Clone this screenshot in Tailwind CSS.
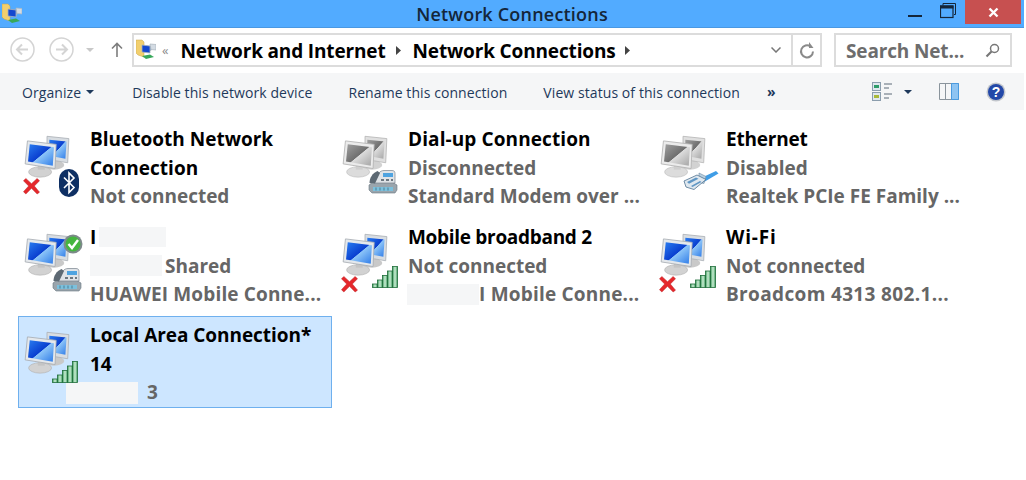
<!DOCTYPE html>
<html lang="en">
<head>
    <meta charset="UTF-8">
    <title>Network Connections</title>
    <script src="https://cdn.jsdelivr.net/npm/@tailwindcss/browser@4"></script>
</head>
<body class="bg-white overflow-hidden w-[1024px] h-[480px] font-['Open_Sans','Noto_Sans',sans-serif]">
    <!-- shared icon parts -->
    <svg width="0" height="0" class="absolute">
        <defs>
            <linearGradient id="blueScreen" x1="0" y1="0" x2="1" y2="1">
                <stop offset="0" stop-color="#2a7df0"/><stop offset="0.5" stop-color="#0a3fd0"/><stop offset="0.52" stop-color="#8cc4f8"/><stop offset="1" stop-color="#2f7ce8"/>
            </linearGradient>
            <linearGradient id="greyScreen" x1="0" y1="0" x2="1" y2="1">
                <stop offset="0" stop-color="#a0a0a0"/><stop offset="0.5" stop-color="#6f6f6f"/><stop offset="0.52" stop-color="#dcdcdc"/><stop offset="1" stop-color="#a5a5a5"/>
            </linearGradient>
            <linearGradient id="bar" x1="0" y1="0" x2="1" y2="0">
                <stop offset="0" stop-color="#3c9a5c"/><stop offset="0.5" stop-color="#cdeed6"/><stop offset="1" stop-color="#3c9a5c"/>
            </linearGradient>
            <symbol id="pcBlue" viewBox="0 0 40 40">
                <ellipse cx="26" cy="27" rx="9" ry="4" fill="#c9c9c9"/>
                <path d="M20 2l19 2-1 21-18-3z" fill="#d8dde2" stroke="#aab0b6" stroke-width=".7"/>
                <path d="M22 5l15 1.500-1 15-14-2.500z" fill="url(#blueScreen)"/>
                <ellipse cx="14" cy="33" rx="10" ry="4.500" fill="#d2d2d2" stroke="#b5b5b5" stroke-width=".6"/>
                <path d="M12 26h6v5h-6z" fill="#c4c4c4"/>
                <path d="M3 6l25 3-1 21-26-4z" fill="#e4e8ec" stroke="#a5abb1" stroke-width=".7"/>
                <path d="M5 9l21 2.500-1 16L3.500 24z" fill="url(#blueScreen)"/>
            </symbol>
            <symbol id="pcGrey" viewBox="0 0 40 40">
                <ellipse cx="26" cy="27" rx="9" ry="4" fill="#d2d2d2"/>
                <path d="M20 2l19 2-1 21-18-3z" fill="#e0e0e0" stroke="#b5b5b5" stroke-width=".7"/>
                <path d="M22 5l15 1.500-1 15-14-2.500z" fill="url(#greyScreen)"/>
                <ellipse cx="14" cy="33" rx="10" ry="4.500" fill="#dcdcdc" stroke="#c0c0c0" stroke-width=".6"/>
                <path d="M12 26h6v5h-6z" fill="#cfcfcf"/>
                <path d="M3 6l25 3-1 21-26-4z" fill="#ebebeb" stroke="#b0b0b0" stroke-width=".7"/>
                <path d="M5 9l21 2.500-1 16L3.500 24z" fill="url(#greyScreen)"/>
            </symbol>
            <symbol id="redX" viewBox="0 0 18 18">
                <path d="M3 1L9 6.500 15 1l2.500 2.500L12 9l5.500 6.500L15 17.500 9 11.500l-6 6L.5 15 6 9 .5 3.500z" fill="#e5272b" stroke="#b81e22" stroke-width=".5"/>
            </symbol>
            <symbol id="signal" viewBox="0 0 26 22">
                <g fill="url(#bar)" stroke="#1f6d3a" stroke-width=".8">
                    <rect x=".5" y="18" width="5" height="3.500"/>
                    <rect x="5.500" y="14" width="5" height="7.500"/>
                    <rect x="10.500" y="9.500" width="5" height="12"/>
                    <rect x="15.500" y="5" width="5" height="16.500"/>
                    <rect x="20.500" y=".5" width="5" height="21"/>
                </g>
            </symbol>
            <symbol id="modem" viewBox="0 0 30 24">
                <path d="M1 15l4-3h19l5 3v5l-2 3H4l-3-3z" fill="#9aa5ad" stroke="#6a7680" stroke-width=".6"/>
                <path d="M5 17h20v4H5z" fill="#7cc0dc"/>
                <path d="M8 17.500v3M12 17.500v3M16 17.500v3M20 17.500v3" stroke="#4c7f96"/>
                <path d="M6 13L11 3c1-1.500 3-2.500 5-2.500h8c2 0 3 1 3 3V13z" fill="#dfe3e7" stroke="#78838c" stroke-width=".7"/>
                <path d="M15 3h10v4H15z" fill="#4ea3e0"/>
                <path d="M1.500 13c0-5 3-10 8-12l2.500 2-5 10.500z" fill="#5d6973"/>
                <path d="M13 9h3v2h-3zM18 9h3v2h-3zM23 9h2v2h-2z" fill="#6d7780"/>
            </symbol>
            <symbol id="plug" viewBox="0 0 36 20">
                <path d="M18 8L33 1l2.500 2.500L21 12z" fill="#3f9de6"/>
                <path d="M16 3l7 3.500-2 7-5-1z" fill="#b8cfe0" stroke="#6f8ba3" stroke-width=".6"/>
                <path d="M1 11l13-6 9 4.500L11 19.500 3 17z" fill="#dfe8ef" stroke="#4f7291" stroke-width=".8"/>
                <path d="M4 12l9-4.500 2.500 1.300-9.500 5zM8 16l9-5 1.500 1-9 5z" fill="#5f96c4"/>
            </symbol>
            <symbol id="folderNet" viewBox="0 0 20 22">
                <path d="M0 1h6l2 2v15l-6-2L0 14z" fill="#f2cf6e" stroke="#c9a548" stroke-width=".5"/>
                <path d="M10 7l5 .5v4l-5-.5z" fill="#6f9fe8" stroke="#aab4bd" stroke-width=".7"/>
                <path d="M14 5l6 .5V11l-5-.5z" fill="#d3dbe3" stroke="#aab4bd" stroke-width=".7"/>
                <path d="M6 6l8 1v7l-8-1z" fill="#1448d0" stroke="#a9b4bd" stroke-width=".8"/>
                <path d="M6 17l8-1.500 4 2.500-8 2z" fill="#37a85a"/>
            </symbol>
        </defs>
    </svg>

    <!-- title bar -->
    <header class="relative h-[28px] bg-[#52abff] border-b border-[#4a98e2] flex items-center justify-center">
        <svg class="absolute left-[2px] top-[3px] w-[20px] h-[22px]"><use href="#folderNet"/></svg>
        <h1 class="text-[18px] font-semibold tracking-[0.2px] text-[#14263a] mt-[2px]">Network Connections</h1>
        <div class="absolute right-[3px] top-0 flex items-start">
            <svg class="w-[14px] h-[24px] mr-[18px]" viewBox="0 0 14 24"><rect y="15" width="14" height="2" fill="#14263a"/></svg>
            <svg class="w-[16px] h-[16px] mr-[9px] mt-[3px]" viewBox="0 0 16 16" fill="none" stroke="#14263a"><path d="M3 2.500V.500h12.500v11H14" stroke-width="1"/><rect x=".5" y="3" width="12.500" height="11.500" stroke-width="1.200"/><rect x=".5" y="3" width="12.500" height="2" fill="#14263a"/></svg>
            <div class="w-[56px] h-[24px] bg-[#c75050] flex items-center justify-center">
                <svg class="w-[11px] h-[11px]" viewBox="0 0 11 11"><path d="M1.500 1.500l8 8M9.500 1.500l-8 8" stroke="#fff" stroke-width="2.400"/></svg>
            </div>
        </div>
    </header>

    <!-- navigation -->
    <nav class="h-[45px] flex items-start pt-[5px] pl-[10px]">
        <svg class="w-[25px] h-[25px] mt-[4px]" viewBox="0 0 25 25" fill="none" stroke="#d4d4d4"><circle cx="12.500" cy="12.500" r="11.500" stroke-width="1.500"/><path d="M18 12.500H7.500M12 7.500l-5 5 5 5" stroke-width="2"/></svg>
        <svg class="w-[25px] h-[25px] mt-[4px] ml-[14px]" viewBox="0 0 25 25" fill="none" stroke="#d4d4d4"><circle cx="12.500" cy="12.500" r="11.500" stroke-width="1.500"/><path d="M7 12.500h10.500M13 7.500l5 5-5 5" stroke-width="2"/></svg>
        <svg class="w-[8px] h-[4px] mt-[15px] ml-[12px]" viewBox="0 0 8 4"><path d="M0 0h8L4 4z" fill="#c8c8c8"/></svg>
        <svg class="w-[12px] h-[15px] mt-[9px] ml-[17px]" viewBox="0 0 12 15" fill="none" stroke="#7d7d7d" stroke-width="1.600"><path d="M6 15V1.500M1 6.500l5-5 5 5"/></svg>
        <div class="ml-[9px] w-[690px] h-[34px] border-2 border-[#dcdcdc] flex items-center">
            <svg class="w-[20px] h-[22px] ml-[2px] shrink-0"><use href="#folderNet"/></svg>
            <span class="ml-[6px] text-[13px] leading-none text-[#8a8a8a]">«</span>
            <span class="ml-[12px] mt-[2px] text-[19px] font-bold tracking-[-0.15px] text-black">Network and Internet</span>
            <svg class="w-[5px] h-[9px] ml-[10px]" viewBox="0 0 5 9"><path d="M0 0l5 4.500L0 9z" fill="#444"/></svg>
            <span class="ml-[12px] mt-[2px] text-[19px] font-bold tracking-[-0.15px] text-black">Network Connections</span>
            <svg class="w-[5px] h-[9px] ml-[9px]" viewBox="0 0 5 9"><path d="M0 0l5 4.500L0 9z" fill="#444"/></svg>
            <svg class="w-[10px] h-[6px] ml-auto mr-[10px]" viewBox="0 0 10 6" fill="none" stroke="#777" stroke-width="1.500"><path d="M.5.500L5 5 9.500.500"/></svg>
            <div class="w-[29px] h-full border-l-2 border-[#dcdcdc] flex items-center justify-center">
                <svg class="w-[16px] h-[17px]" viewBox="0 0 16 17" fill="none" stroke="#8a8a8a" stroke-width="2"><path d="M11.500 4.500A6 6 0 1 0 14 9.500"/><path d="M10 0v6h4.500z" fill="#8a8a8a" stroke="none"/></svg>
            </div>
        </div>
        <div class="ml-[12px] w-[178px] h-[34px] border-2 border-[#dcdcdc] flex items-center pl-[10px]">
            <span class="mt-[3px] text-[19px] font-bold tracking-[-0.15px] text-[#6d6d6d]">Search Net...</span>
            <svg class="w-[15px] h-[15px] ml-auto mr-[10px]" viewBox="0 0 15 15" fill="none" stroke="#777"><circle cx="9.500" cy="5.500" r="4" stroke-width="1.500"/><path d="M6.500 8.500L1.500 13.500" stroke-width="2.200"/></svg>
        </div>
    </nav>

    <!-- command bar -->
    <div class="h-[37px] bg-[#f5f6f7] flex items-center pl-[22px] text-[14px] tracking-[0.08px] text-[#1e395b]">
        <span class="mt-[2px]">Organize</span>
        <svg class="w-[8px] h-[4px] ml-[5px]" viewBox="0 0 8 4"><path d="M0 0h8L4 4z" fill="#1e395b"/></svg>
        <span class="ml-[38px] mt-[2px]">Disable this network device</span>
        <span class="ml-[36px] mt-[2px]">Rename this connection</span>
        <span class="ml-[36px] mt-[2px]">View status of this connection</span>
        <span class="ml-[27px] text-[14px] font-bold leading-none">»</span>
        <svg class="w-[23px] h-[20px] ml-[96px]" viewBox="0 0 23 20" fill="none">
            <rect x=".5" y=".5" width="8" height="8" fill="#dfe8ee" stroke="#8b9dad"/><rect x="2" y="3" width="5" height="3" fill="#2f9c6a"/>
            <rect x=".5" y="10.500" width="8" height="8" fill="#dfe8ee" stroke="#8b9dad"/><rect x="2" y="13" width="5" height="3" fill="#a8b83a"/>
            <path d="M12 2h8M12 6h5M12 12h8M12 16h5" stroke="#5d6b78"/>
        </svg>
        <svg class="w-[8px] h-[4px] ml-[9px]" viewBox="0 0 8 4"><path d="M0 0h8L4 4z" fill="#1e395b"/></svg>
        <svg class="w-[20px] h-[18px] ml-[27px]" viewBox="0 0 20 18" fill="none"><rect x="13" y="1" width="6" height="16" fill="#8ec4f2"/><path d="M.5.500h19v16H.5zM6.500.500v16" stroke="#8a949c"/><path d="M12.500.500h7v16h-7z" stroke="#4a9be0"/></svg>
        <svg class="w-[20px] h-[20px] ml-[27px]" viewBox="0 0 20 20"><circle cx="10" cy="10" r="9.500" fill="#c2c6cc"/><circle cx="10" cy="10" r="8" fill="#2348a8"/><text x="10" y="15" text-anchor="middle" font-size="14" font-weight="700" fill="#fff" font-family="Liberation Sans, sans-serif">?</text></svg>
    </div>

    <!-- connections -->
    <main class="grid grid-cols-[314px_314px_314px] auto-rows-[92px] gap-x-[4px] gap-y-[6px] pl-[18px] pt-[10px] text-[19px] font-bold leading-[28.5px] text-[#666]">
        <div class="flex">
            <div class="relative w-[72px] shrink-0">
                <svg class="absolute left-[4px] top-[14px] w-[50px] h-[46px]"><use href="#pcBlue"/></svg>
                <svg class="absolute left-[5px] top-[57px] w-[17px] h-[18px]"><use href="#redX"/></svg>
                <svg class="absolute left-[40px] top-[48px] w-[22px] h-[30px]" viewBox="0 0 22 30"><rect x="1" y="1" width="20" height="28" rx="10" fill="#0e2f63"/><path d="M6 9.500l10 10-5 5V5l5 5-10 10" fill="none" stroke="#fff" stroke-width="1.600"/></svg>
            </div>
            <div class="pt-[5px]"><div class="text-black">Bluetooth Network<br>Connection</div><div>Not connected</div></div>
        </div>
        <div class="flex">
            <div class="relative w-[72px] shrink-0">
                <svg class="absolute left-[4px] top-[14px] w-[50px] h-[46px]"><use href="#pcGrey"/></svg>
                <svg class="absolute left-[32px] top-[50px] w-[30px] h-[24px]"><use href="#modem"/></svg>
            </div>
            <div class="pt-[5px]"><div class="text-black tracking-[0.1px]">Dial-up Connection</div><div>Disconnected</div><div>Standard Modem over ...</div></div>
        </div>
        <div class="flex">
            <div class="relative w-[72px] shrink-0">
                <svg class="absolute left-[4px] top-[14px] w-[50px] h-[46px]"><use href="#pcGrey"/></svg>
                <svg class="absolute left-[29px] top-[50px] w-[36px] h-[20px]"><use href="#plug"/></svg>
            </div>
            <div class="pt-[5px]"><div class="text-black tracking-[-0.2px]">Ethernet</div><div>Disabled</div><div>Realtek PCIe FE Family ...</div></div>
        </div>
        <div class="flex">
            <div class="relative w-[72px] shrink-0">
                <svg class="absolute left-[4px] top-[14px] w-[50px] h-[46px]"><use href="#pcBlue"/></svg>
                <svg class="absolute left-[45px] top-[16px] w-[20px] h-[20px]" viewBox="0 0 20 20"><circle cx="10" cy="10" r="9.500" fill="#7d8a8a"/><circle cx="10" cy="10" r="7.500" fill="#45b53f"/><path d="M5.500 10l3.500 4 6-8" fill="none" stroke="#fff" stroke-width="2.400"/></svg>
                <svg class="absolute left-[34px] top-[50px] w-[30px] h-[24px]"><use href="#modem"/></svg>
            </div>
            <div class="pt-[5px]">
                <div class="text-black flex items-center">I<span class="ml-[3px] w-[67px] h-[20px] bg-[#f5f6f7]"></span></div>
                <div class="flex items-center"><span class="w-[72px] h-[21px] bg-[#f5f6f7] mr-[3px]"></span>Shared</div>
                <div class="tracking-[0.15px]">HUAWEI Mobile Conne...</div>
            </div>
        </div>
        <div class="flex">
            <div class="relative w-[72px] shrink-0">
                <svg class="absolute left-[4px] top-[14px] w-[50px] h-[46px]"><use href="#pcBlue"/></svg>
                <svg class="absolute left-[5px] top-[57px] w-[17px] h-[18px]"><use href="#redX"/></svg>
                <svg class="absolute left-[36px] top-[48px] w-[26px] h-[22px]"><use href="#signal"/></svg>
            </div>
            <div class="pt-[5px]">
                <div class="text-black tracking-[-0.3px]">Mobile broadband 2</div>
                <div>Not connected</div>
                <div class="flex items-center -ml-[1px] tracking-[0.2px]"><span class="w-[72px] h-[21px] bg-[#f5f6f7]"></span>I Mobile Conne...</div>
            </div>
        </div>
        <div class="flex">
            <div class="relative w-[72px] shrink-0">
                <svg class="absolute left-[4px] top-[14px] w-[50px] h-[46px]"><use href="#pcBlue"/></svg>
                <svg class="absolute left-[5px] top-[57px] w-[17px] h-[18px]"><use href="#redX"/></svg>
                <svg class="absolute left-[36px] top-[48px] w-[26px] h-[22px]"><use href="#signal"/></svg>
            </div>
            <div class="pt-[5px]"><div class="text-black tracking-[0.8px]">Wi-Fi</div><div>Not connected</div><div class="tracking-[0.35px]">Broadcom 4313 802.1...</div></div>
        </div>
        <div class="flex bg-[#cde6ff] border border-[#6fb0ee]">
            <div class="relative w-[71px] shrink-0">
                <svg class="absolute left-[3px] top-[13px] w-[50px] h-[46px]"><use href="#pcBlue"/></svg>
                <svg class="absolute left-[33px] top-[44px] w-[26px] h-[22px]"><use href="#signal"/></svg>
            </div>
            <div class="pt-[4px]">
                <div class="text-black tracking-[-0.05px]">Local Area Connection*<br>14</div>
                <div class="flex items-center -ml-[24px]"><span class="w-[72px] h-[22px] bg-[#f5f6f7] mt-[1px] mr-[9px]"></span>3</div>
            </div>
        </div>
    </main>
</body>
</html>
